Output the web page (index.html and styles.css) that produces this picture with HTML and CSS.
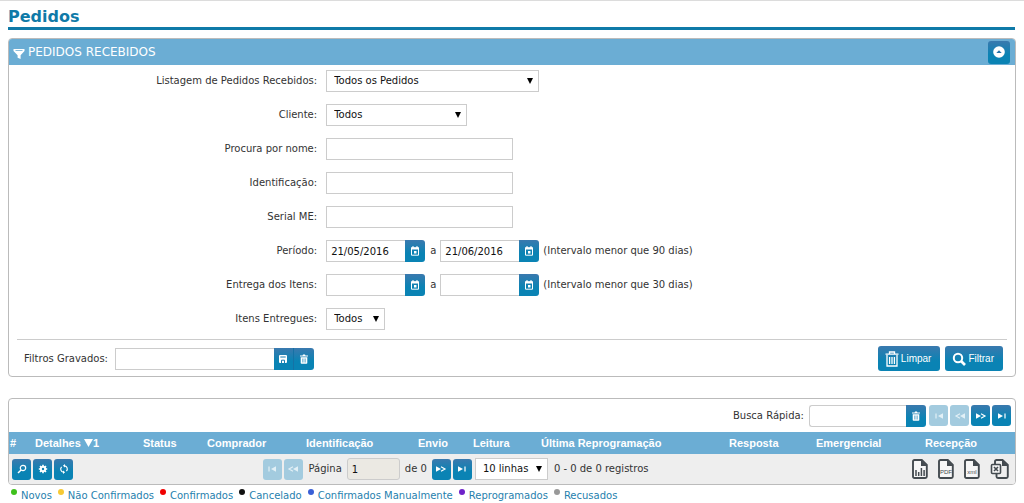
FILE: index.html
```html
<!DOCTYPE html>
<html lang="pt-BR">
<head>
<meta charset="utf-8">
<title>Pedidos</title>
<link rel="stylesheet" href="styles.css">
</head>
<body>
<svg class="sprite" aria-hidden="true">
  <symbol id="i-cal" viewBox="0 0 10 10"><path d="M1.5 1.8h7v7.4h-7z" fill="none" stroke="currentColor"/><path d="M1 1.5h8v2H1zM2.3.3h1.4v2H2.3zM6.3.3h1.4v2H6.3zM4 5h2.5v2.6H4z" fill="currentColor"/></symbol>
  <symbol id="i-trash" viewBox="0 0 10 10"><path d="M1 1.4h2.6L4 .5h2l.4.9H9v1.2H1zM1.7 3.3h6.6V9q0 .8-.8.8h-5q-.8 0-.8-.8z" fill="currentColor"/><path d="M3.6 4.5v4M5 4.5v4M6.4 4.5v4" stroke="#0f7cb0" stroke-width=".5"/></symbol>
  <symbol id="i-save" viewBox="0 0 10 10"><path d="M2 1h6q1 0 1 1v6q0 1-1 1H2q-1 0-1-1V2q0-1 1-1z" fill="currentColor"/><path d="M2.3 3h5.4M3.500 9V6.200h3V9" fill="none" stroke="#1b7cb1" stroke-width="1"/></symbol>
  <symbol id="i-first" viewBox="0 0 12 8"><path d="M3 1.5v5" stroke="currentColor" stroke-width="1.2"/><path d="M10 1.3v5.4L5 4z" fill="currentColor"/></symbol>
  <symbol id="i-prev" viewBox="0 0 12 8"><path d="M6 1.7L2 4l4 2.3" fill="none" stroke="currentColor" stroke-width="1.2"/><path d="M11 1.3v5.4L6 4z" fill="currentColor"/></symbol>
  <symbol id="i-next" viewBox="0 0 12 8"><path d="M6 1.7L10 4 6 6.3" fill="none" stroke="currentColor" stroke-width="1.2"/><path d="M1 1.3v5.4L6 4z" fill="currentColor"/></symbol>
  <symbol id="i-last" viewBox="0 0 12 8"><path d="M9 1.5v5" stroke="currentColor" stroke-width="1.2"/><path d="M2 1.3v5.4L7 4z" fill="currentColor"/></symbol>
  <symbol id="i-file" viewBox="0 0 16 20"><path d="M2.5 1h7.3L14.8 6v11.5q0 1.5-1.5 1.5h-10.800q-1.500 0-1.500-1.500v-15Q1 1 2.500 1z" fill="#f7f7f7" stroke="#444b50" stroke-width="1.900"/><path d="M9 1v6h6z" fill="#444b50"/></symbol>
</svg>

<header class="page-head"><h1 class="page-title">Pedidos</h1></header>

<main class="page">
  <form class="panel filters">
    <div class="panel-head">
      <svg class="funnel" viewBox="0 0 12 12"><path d="M.5 1h11v2L7.600 7.200V11L4.600 9.800V7.200L.5 3z" fill="#fff"/><path d="M2.500 2.500h7" stroke="#6badd4" stroke-width=".8"/></svg>
      <h2 class="panel-title">PEDIDOS RECEBIDOS</h2>
      <button class="btn collapse" type="button" aria-label="Recolher"><svg viewBox="0 0 12 12"><circle cx="6" cy="6" r="5.800" fill="#fff"/><path d="M3.300 7L6 4.300 8.700 7z" fill="#2471a8"/></svg></button>
    </div>

    <div class="fields">
      <label for="lista">Listagem de Pedidos Recebidos:</label>
      <div class="control"><span class="pick pick-l"><select id="lista"><option>Todos os Pedidos</option></select></span></div>

      <label for="cliente">Cliente:</label>
      <div class="control"><span class="pick pick-m"><select id="cliente"><option>Todos</option></select></span></div>

      <label for="nome">Procura por nome:</label>
      <div class="control"><input class="text" id="nome" type="text"></div>

      <label for="ident">Identificação:</label>
      <div class="control"><input class="text" id="ident" type="text"></div>

      <label for="serial">Serial ME:</label>
      <div class="control"><input class="text" id="serial" type="text"></div>

      <label for="per1">Período:</label>
      <div class="control">
        <span class="joined"><input class="date" id="per1" type="text" value="21/05/2016"><button class="btn addon" type="button" aria-label="Calendário"><svg><use href="#i-cal"/></svg></button></span>
        <label for="per2">a</label>
        <span class="joined"><input class="date" id="per2" type="text" value="21/06/2016"><button class="btn addon" type="button" aria-label="Calendário"><svg><use href="#i-cal"/></svg></button></span>
        <span>(Intervalo menor que 90 dias)</span>
      </div>

      <label for="ent1">Entrega dos Itens:</label>
      <div class="control">
        <span class="joined"><input class="date" id="ent1" type="text"><button class="btn addon" type="button" aria-label="Calendário"><svg><use href="#i-cal"/></svg></button></span>
        <label for="ent2">a</label>
        <span class="joined"><input class="date" id="ent2" type="text"><button class="btn addon" type="button" aria-label="Calendário"><svg><use href="#i-cal"/></svg></button></span>
        <span>(Intervalo menor que 30 dias)</span>
      </div>

      <label for="itens">Itens Entregues:</label>
      <div class="control"><span class="pick pick-s"><select id="itens"><option>Todos</option></select></span></div>
    </div>

    <div class="actions">
      <label for="gravados">Filtros Gravados:</label>
      <span class="joined"><input class="saved" id="gravados" type="text"><button class="btn addon mid" type="button" aria-label="Salvar"><svg><use href="#i-save"/></svg></button><button class="btn addon" type="button" aria-label="Excluir"><svg><use href="#i-trash"/></svg></button></span>
      <div class="main-buttons">
        <button class="btn big" type="reset"><svg viewBox="0 0 14 16"><path d="M.5 3.200h13M4.500 3V1h5v2M2 4v11h10V4M4.600 6v7M7 6v7M9.400 6v7" fill="none" stroke="#fff" stroke-width="1.300"/></svg>Limpar</button>
        <button class="btn big" type="button"><svg viewBox="0 0 14 16"><circle cx="6" cy="7" r="4.200" fill="none" stroke="#fff" stroke-width="2"/><path d="M9 10l4 4" stroke="#fff" stroke-width="2.600"/></svg>Filtrar</button>
      </div>
    </div>
  </form>

  <section class="panel results">
    <div class="search-bar">
      <label for="busca">Busca Rápida:</label>
      <span class="joined"><input class="quick" id="busca" type="text"><button class="btn addon" type="button" aria-label="Limpar busca"><svg><use href="#i-trash"/></svg></button></span>
      <span class="pager">
        <button class="btn nav" type="button" disabled aria-label="Primeira"><svg><use href="#i-first"/></svg></button>
        <button class="btn nav" type="button" disabled aria-label="Anterior"><svg><use href="#i-prev"/></svg></button>
        <button class="btn nav" type="button" aria-label="Próxima"><svg><use href="#i-next"/></svg></button>
        <button class="btn nav" type="button" aria-label="Última"><svg><use href="#i-last"/></svg></button>
      </span>
    </div>

    <table class="grid">
      <colgroup><col class="c-num"><col class="c-det"><col class="c-sta"><col class="c-com"><col class="c-ide"><col class="c-env"><col class="c-lei"><col class="c-rep"><col class="c-res"><col class="c-eme"><col></colgroup>
      <thead><tr><th>#</th><th>Detalhes <svg class="sort" viewBox="0 0 9 8"><path d="M0 0h9L4.500 8z" fill="#fff"/></svg>1</th><th>Status</th><th>Comprador</th><th>Identificação</th><th>Envio</th><th>Leitura</th><th>Última Reprogramação</th><th>Resposta</th><th>Emergencial</th><th>Recepção</th></tr></thead>
    </table>

    <div class="foot">
      <div class="tools">
        <button class="btn nav" type="button" aria-label="Pesquisar"><svg viewBox="0 0 10 10"><circle cx="6" cy="4" r="2.700" fill="none" stroke="#fff" stroke-width="1.200"/><path d="M4.100 6L1 9" stroke="#fff" stroke-width="1.500"/></svg></button>
        <button class="btn nav" type="button" aria-label="Configurar"><svg viewBox="0 0 10 10"><circle cx="5" cy="5" r="2.200" fill="none" stroke="#fff" stroke-width="2"/><path d="M5 .8v1.400M5 7.800v1.400M.8 5h1.400M7.800 5h1.400M2 2l1 1M7 7l1 1M8 2L7 3M3 7L2 8" stroke="#fff" stroke-width="1.600"/></svg></button>
        <button class="btn nav" type="button" aria-label="Atualizar"><svg viewBox="0 0 10 10"><path d="M5.500 1.800A3.200 3.200 0 0 1 7.400 7.200M4.500 8.200A3.200 3.200 0 0 1 2.600 2.800" fill="none" stroke="#fff" stroke-width="1.200"/><path d="M6 0v3.600L3.900 1.800zM4 10V6.400l2.100 1.800z" fill="#fff"/></svg></button>
      </div>
      <div class="paging">
        <button class="btn nav" type="button" disabled aria-label="Primeira"><svg><use href="#i-first"/></svg></button>
        <button class="btn nav" type="button" disabled aria-label="Anterior"><svg><use href="#i-prev"/></svg></button>
        <label class="page-label" for="pagina">Página</label>
        <input class="page-no" id="pagina" type="text" value="1">
        <span class="page-of">de 0</span>
        <button class="btn nav" type="button" aria-label="Próxima"><svg><use href="#i-next"/></svg></button>
        <button class="btn nav" type="button" aria-label="Última"><svg><use href="#i-last"/></svg></button>
        <span class="pick pick-rows"><select aria-label="Linhas por página"><option>10 linhas</option></select></span>
        <span class="count">0 - 0 de 0 registros</span>
      </div>
      <div class="exports">
        <button class="export" type="button" aria-label="Gráfico"><svg viewBox="0 0 16 20"><use href="#i-file"/><path d="M4 17v-6M6.700 17v-4M9.400 17V9M12.100 17v-6" stroke="#444b50" stroke-width="1.500"/></svg></button>
        <button class="export" type="button" aria-label="Exportar PDF"><svg viewBox="0 0 16 20"><use href="#i-file"/><text class="tag" x="8" y="15" text-anchor="middle">PDF</text></svg></button>
        <button class="export" type="button" aria-label="Exportar XML"><svg viewBox="0 0 16 20"><use href="#i-file"/><text class="tag" x="8" y="15" text-anchor="middle">xml</text></svg></button>
        <button class="export wide" type="button" aria-label="Exportar Excel"><svg viewBox="0 0 19 20"><path d="M6 1h6.500L17.800 6v11.500q0 1.500-1.500 1.500H8q-1.500 0-1.500-1.500V15M5 5V2.500Q5 1 6.500 1" fill="none" stroke="#444b50" stroke-width="1.900"/><path d="M12 1v6h6z" fill="#444b50"/><rect x="1.500" y="5.500" width="9" height="9" rx="1" fill="#f7f7f7" stroke="#444b50" stroke-width="1.600"/><path d="M4 8l4 4M8 8l-4 4" stroke="#444b50" stroke-width="1.600"/></svg></button>
      </div>
    </div>
  </section>

  <nav class="legend">
    <a href="#"><i class="dot green"></i>Novos</a>
    <a href="#"><i class="dot yellow"></i>Não Confirmados</a>
    <a href="#"><i class="dot red"></i>Confirmados</a>
    <a href="#"><i class="dot black"></i>Cancelado</a>
    <a href="#"><i class="dot blue"></i>Confirmados Manualmente</a>
    <a href="#"><i class="dot purple"></i>Reprogramados</a>
    <a href="#"><i class="dot gray"></i>Recusados</a>
  </nav>
</main>
</body>
</html>
```
FILE: styles.css
```css
* { box-sizing: border-box; }
body {
  margin: 0;
  border-top: 1px solid #dcdcdc;
  background: #fff;
  color: #333;
  font: 10px/14px "DejaVu Sans", Verdana, sans-serif;
}
button, input, select { font: inherit; color: #111; margin: 0; }
svg { display: block; }
.sprite { position: absolute; width: 0; height: 0; }

.page-head { margin: 0 9px 0 8px; padding-top: 6px; border-bottom: 3px solid #0f7aa8; }
.page-title { margin: 0; font-size: 16px; line-height: 20px; color: #0f7aa8; }
.page { padding: 8px 8px 0; }

.panel { border: 1px solid #bbb; border-radius: 4px; background: #fff; }
.panel-head {
  display: flex;
  align-items: center;
  height: 26px;
  padding: 0 5px 0 4px;
  background: #6badd4;
  border-radius: 3px 3px 0 0;
}
.funnel { width: 12px; height: 12px; margin-top: 4px; }
.panel-title { margin: 0 auto 0 3px; font-size: 12px; font-weight: normal; color: #fff; }

.btn {
  display: inline-flex;
  align-items: center;
  justify-content: center;
  padding: 0;
  border: 0;
  border-radius: 3px;
  color: #fff;
  background: linear-gradient(#3a79ae, #0a83b4 60%);
}
.btn svg { width: 10px; height: 10px; }
.btn:disabled { background: #a3cbdf; color: #e2f0f6; }
.collapse { width: 22px; height: 23px; }
.collapse svg { width: 12px; height: 12px; }

.fields {
  display: grid;
  grid-template-columns: 4fr 9fr;
  column-gap: 9px;
  row-gap: 12px;
  align-items: center;
  padding: 5px 0 9px 2px;
}
.fields > label { text-align: right; }
.control { display: flex; align-items: center; gap: 4px; height: 22px; }
.control > label { padding-left: 1px; }

input {
  height: 22px;
  padding: 0 4px;
  border: 1px solid #ccc;
  border-radius: 0;
  background: #fff;
}
.text { width: 187px; }
.joined { display: inline-flex; }
.joined input { border-right: 0; }
.date { width: 79px; }
.addon { width: 20px; height: 22px; border-radius: 0 3px 3px 0; }
.mid { border-radius: 0; border-right: 1px solid #1572a5; }
.saved { width: 159px; }
.quick { width: 97px; border-radius: 3px 0 0 3px; }

.pick { position: relative; display: inline-flex; }
.pick::after {
  content: "";
  position: absolute;
  right: 6px;
  top: 8px;
  border: 3px solid transparent;
  border-top: 6px solid #000;
  border-bottom: 0;
  pointer-events: none;
}
.pick select {
  width: 100%;
  height: 22px;
  padding: 0 7px;
  border: 1px solid #ccc;
  border-radius: 0;
  background: #fff;
  appearance: none;
}
.pick-l { width: 213px; }
.pick-m { width: 141px; }
.pick-s { width: 59px; }
.pick-rows { width: 73px; margin-left: 1px; }

.actions {
  display: flex;
  align-items: center;
  gap: 7px;
  margin: 0 8px;
  padding: 6px 4px 5px 7px;
  border-top: 1px solid #ccc;
}
.main-buttons { display: flex; gap: 5px; margin-left: auto; }
.big {
  gap: 2px;
  height: 25px;
  padding: 0 9px 0 7px;
  font-family: "Liberation Sans", Arial, sans-serif;
  color: #fff;
}
.big svg { width: 14px; height: 16px; }

.results { margin-top: 21px; }
.search-bar { display: flex; align-items: center; justify-content: flex-end; gap: 5px; height: 33px; padding-right: 4px; }
.pager, .tools { display: flex; gap: 2px; }
.nav { width: 19px; height: 21px; }
.pager svg, .paging .btn svg { width: 12px; height: 8px; }
.search-bar .pager { margin-left: -2px; }

.grid { width: 100%; table-layout: fixed; border-collapse: collapse; background: #6badd4; }
.grid th {
  height: 22px;
  padding: 0 0 0 1px;
  text-align: left;
  white-space: nowrap;
  color: #fff;
  font: bold 11px/14px "Liberation Sans", Arial, sans-serif;
}
.sort { display: inline; width: 9px; height: 8px; vertical-align: baseline; }
.c-num { width: 25px; }
.c-det { width: 108px; }
.c-sta { width: 64px; }
.c-com { width: 99px; }
.c-ide { width: 112px; }
.c-env { width: 55px; }
.c-lei { width: 68px; }
.c-rep { width: 188px; }
.c-res { width: 87px; }
.c-eme { width: 109px; }

.foot {
  display: grid;
  grid-template-columns: 41fr auto 59fr;
  align-items: center;
  height: 30px;
  padding: 0 6px 0 3px;
  background: #eee;
  border-radius: 0 0 3px 3px;
}
.paging { display: flex; align-items: center; gap: 2px; }
.page-label { padding: 0 3px 0 4px; }
.page-no { width: 53px; background: #ebe9e3; border-radius: 3px; }
.page-of { padding: 0 3px; }
.count { padding-left: 4px; }
.exports { display: flex; justify-content: flex-end; gap: 10px; }
.export { padding: 0; border: 0; background: none; }
.export svg { width: 16px; height: 20px; }
.export.wide svg { width: 19px; }
.tag { font: 6px "Liberation Sans", Arial, sans-serif; fill: #444b50; }

.legend { display: flex; gap: 6px; padding: 2px 0 0 3px; }
.legend a { display: flex; gap: 4px; color: #1f7fae; text-decoration: none; line-height: 18px; }
.dot { width: 6px; height: 6px; margin-top: 2px; border-radius: 50%; }
.green { background: #3fc11c; }
.yellow { background: #f6c935; }
.red { background: #f00000; }
.black { background: #111; }
.blue { background: #3a5fd6; }
.purple { background: #6f22c9; }
.gray { background: #999; }
```
